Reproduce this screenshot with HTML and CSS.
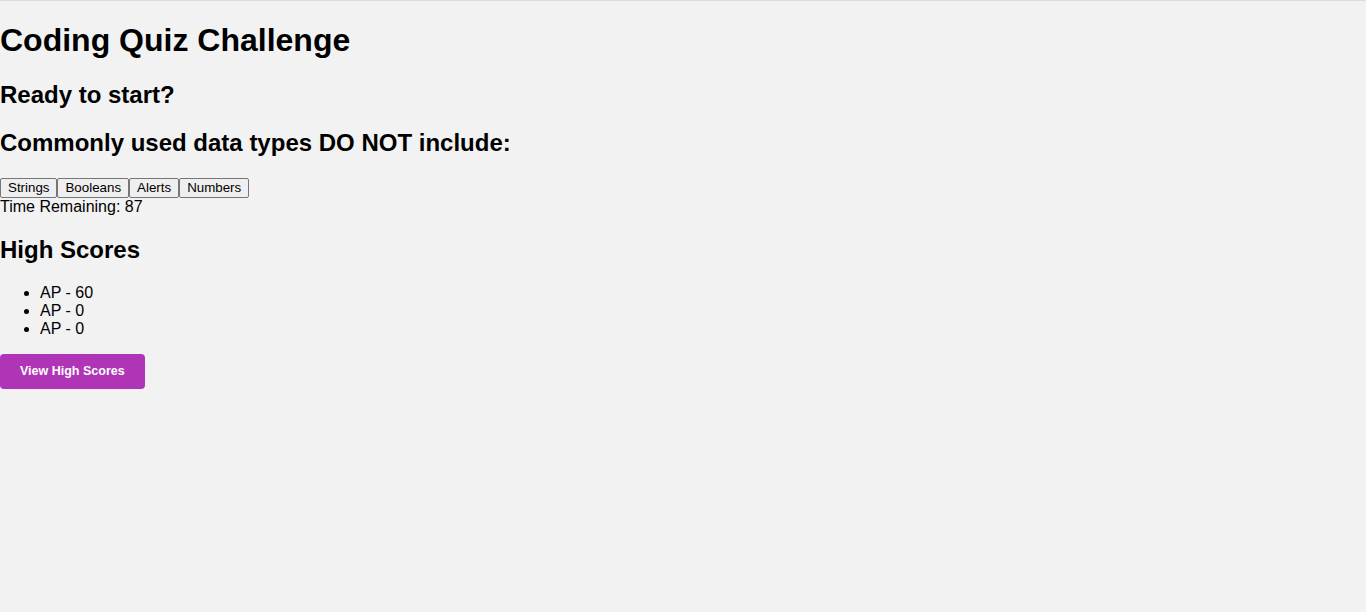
FILE: index.html
```html
<!DOCTYPE html>
<html lang="en">
<head>
<meta charset="utf-8">
<title>Coding Quiz Challenge</title>
<link rel="stylesheet" href="styles.css">
</head>
<body>
<h1>Coding Quiz Challenge</h1>
<h2>Ready to start?</h2>
<h2>Commonly used data types DO NOT include:</h2>
<div class="answers"><button class="answer">Strings</button><button class="answer">Booleans</button><button class="answer">Alerts</button><button class="answer">Numbers</button></div>
<div class="timer">Time Remaining: 87</div>
<h2>High Scores</h2>
<ul class="scores">
<li>AP - 60</li>
<li>AP - 0</li>
<li>AP - 0</li>
</ul>
<button class="view-btn">View High Scores</button>
</body>
</html>
```

FILE: styles.css
```css
html {
  background: #f2f2f2;
}
body {
  margin: 0;
  border-top: 1px solid #dcdcdc;
  background: #f2f2f2;
  font-family: "Liberation Sans", Arial, sans-serif;
  font-size: 16px;
  color: #000;
  min-height: 611px;
}
h1 {
  font-size: 32px;
  margin: 21.44px 0;
}
h2 {
  font-size: 24px;
  margin: 19.92px 0;
}
.answers {
  display: flex;
  padding-top: 1px;
}
.answer {
  font-family: "Liberation Sans", Arial, sans-serif;
  font-size: 13.333px;
  line-height: 16px;
  padding: 1px 7px;
  margin: 0;
  background: #efefef;
  border: 1px solid #767676;
  border-radius: 2px;
  color: #000;
}
.timer {
  line-height: 18px;
}
.scores {
  margin: 16px 0;
  padding-left: 40px;
}
.view-btn {
  font-family: "Liberation Sans", Arial, sans-serif;
  font-size: 12.5px;
  font-weight: bold;
  white-space: nowrap;
  color: #fff;
  background: #b035b6;
  border: none;
  border-radius: 4px;
  padding: 0 20px;
  height: 35px;
  margin: 0;
}
```
